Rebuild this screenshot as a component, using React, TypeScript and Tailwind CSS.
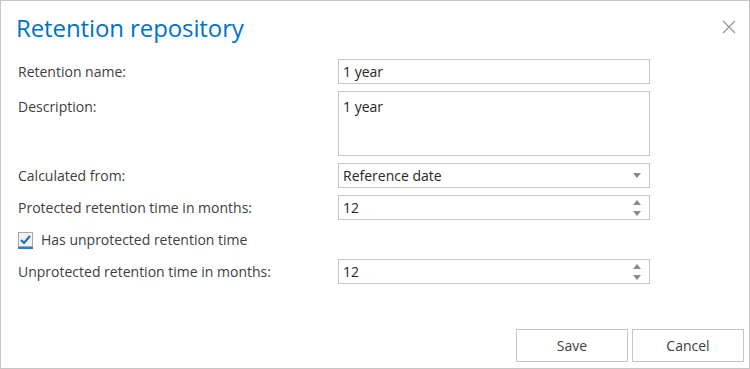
// Small grey triangle used by the select and the number spinners
const Tri = ({ up }: { up?: boolean }) => (
  <svg width="8" height="5" viewBox="0 0 8 5" className="block">
    {up ? <path d="M0 5 L4 0 L8 5 Z" fill="#888" /> : <path d="M0 0 L8 0 L4 5 Z" fill="#888" />}
  </svg>
);

const Field = ({ label, children, top }: { label: string; children: React.ReactNode; top?: boolean }) => (
  <div className={top ? "flex items-start" : "flex items-center"}>
    <div className={top ? "w-[320px] pt-[5px]" : "w-[320px]"}>{label}</div>
    {children}
  </div>
);

const Box = ({ children, className = "" }: { children?: React.ReactNode; className?: string }) => (
  <div className={"w-[312px] border border-[#c6c6c6] bg-white flex px-[4px] text-[#262626] " + className}>
    {children}
  </div>
);

const Spinner = () => (
  <div className="flex flex-col gap-[6px]">
    <Tri up />
    <Tri />
  </div>
);

export default function App() {
  return (
    <div
      className="w-[750px] h-[369px] border border-[#c6c6c6] bg-white flex flex-col text-[14px] text-[#404040]"
      style={{ fontFamily: "'Open Sans', 'Liberation Sans', sans-serif" }}
    >
      {/* header */}
      <div className="flex items-start pl-[15px] pr-[13px] pt-[11px] h-[57px]">
        <h1 className="text-[24px] text-[#0072c6] leading-[32px] tracking-[-0.1px]">Retention repository</h1>
        <button className="ml-auto mt-[8px]">
          <svg width="14" height="14" viewBox="0 0 14 14">
            <path d="M1 1 L13 13 M13 1 L1 13" stroke="#9a9a9a" strokeWidth="1.4" />
          </svg>
        </button>
      </div>

      {/* form */}
      <div className="flex flex-col gap-[7px] pl-[17px] mt-[1px]">
        <Field label="Retention name:">
          <Box className="h-[25px] items-center">1 year</Box>
        </Field>
        <Field label="Description:" top>
          <Box className="h-[65px] items-start pt-[4px]">1 year</Box>
        </Field>
        <Field label="Calculated from:">
          <Box className="h-[25px] items-center justify-between pr-[8px]">
            <span>Reference date</span>
            <Tri />
          </Box>
        </Field>
        <Field label="Protected retention time in months:">
          <Box className="h-[25px] items-center justify-between pr-[8px]">
            <span>12</span>
            <Spinner />
          </Box>
        </Field>
        <div className="flex items-center h-[25px]">
          <div className="relative w-[15px] h-[15px] border border-[#a8a8a8] bg-[#f3f3f3] flex items-center justify-center">
            <svg width="11" height="10" viewBox="0 0 11 10">
              <path d="M1 5 L4 8 L10 1" stroke="#1b6fc4" strokeWidth="2.2" fill="none" />
            </svg>
            <div className="absolute left-[-1px] right-[-1px] bottom-[-3px] h-[2px] bg-[#2b7bd0]" />
          </div>
          <span className="ml-[8px]">Has unprotected retention time</span>
        </div>
        <Field label="Unprotected retention time in months:">
          <Box className="h-[25px] items-center justify-between pr-[8px]">
            <span>12</span>
            <Spinner />
          </Box>
        </Field>
      </div>

      {/* footer */}
      <div className="mt-auto mb-[6px] flex justify-end gap-[4px] pr-[5px]">
        <button className="w-[112px] h-[33px] border border-[#c6c6c6] bg-white text-[#404040]">Save</button>
        <button className="w-[112px] h-[33px] border border-[#c6c6c6] bg-white text-[#404040]">Cancel</button>
      </div>
    </div>
  );
}
